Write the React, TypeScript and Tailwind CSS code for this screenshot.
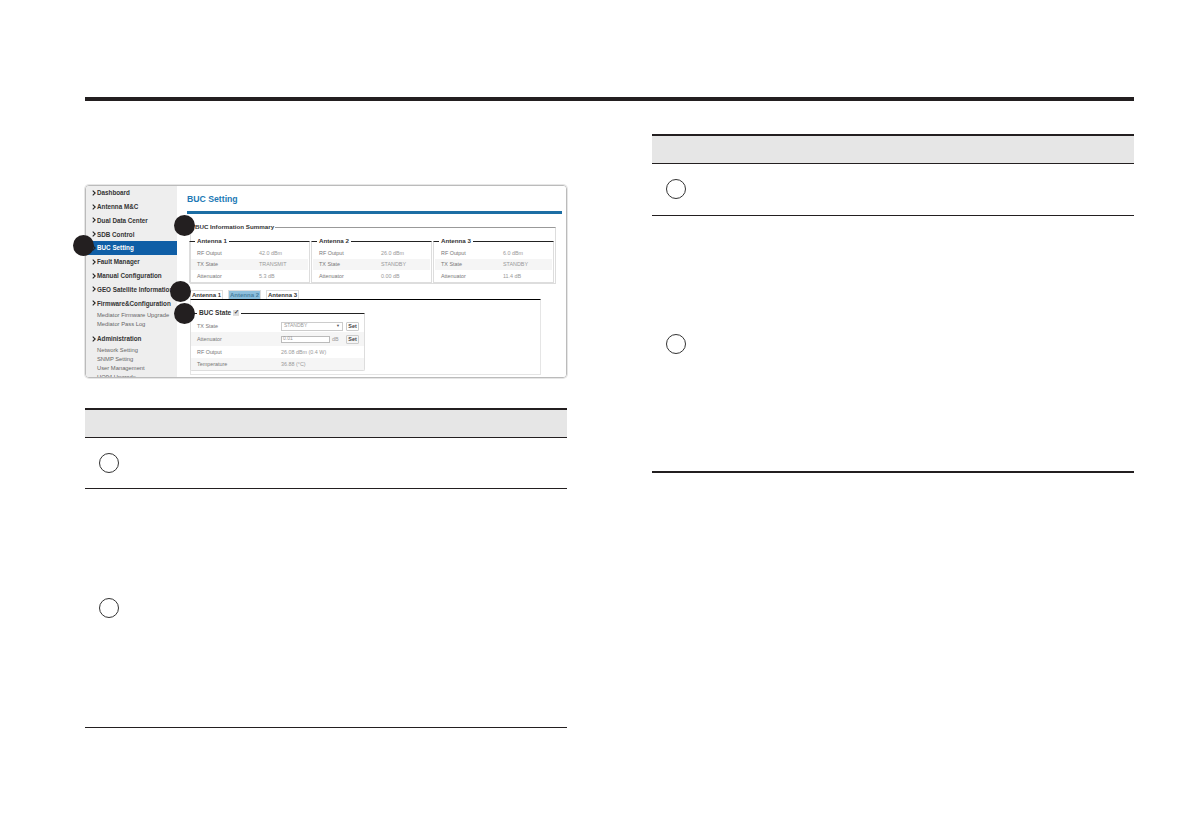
import { ReactNode } from 'react'

const font = { fontFamily: '"Liberation Sans", Arial, sans-serif' }

function Chevron() {
  return (
    <svg width="4" height="6" viewBox="0 0 4 6" className="mr-px shrink-0">
      <path d="M0.7 0.6 L3.2 3 L0.7 5.4" fill="none" stroke="#222" strokeWidth="1.1" />
    </svg>
  )
}

function NavItem({ label, active }: { label: string; active?: boolean }) {
  return (
    <div
      className={`flex items-center h-[13.8px] pl-[6px] text-[6.3px] font-bold whitespace-nowrap ${
        active ? 'bg-[#0f5ea6] text-white' : 'text-[#333]'
      }`}
    >
      <Chevron />
      {label}
    </div>
  )
}

function SubItem({ label }: { label: string }) {
  return <div className="h-[9px] leading-[9px] pl-[11px] text-[5.8px] text-[#666] whitespace-nowrap">{label}</div>
}

function SummaryBox({ title, rows }: { title: string; rows: string[] }) {
  const labels = ['RF Output', 'TX State', 'Attenuator']
  return (
    <fieldset className="w-[121px] h-[46px] border border-[#ddd] border-t-[#222]">
      <legend className="ml-[5px] px-[2px] text-[6.2px] font-bold leading-[8px] text-[#333]">{title}</legend>
      <div className="mt-[2px] px-px">
        {labels.map((l, i) => (
          <div
            key={l}
            className={`flex items-center h-[11.5px] pl-[6px] text-[5.4px] text-[#777] ${i === 1 ? 'bg-[#f5f5f5]' : ''}`}
          >
            <span className="w-[62px]">{l}</span>
            <span className="text-[#999]">{rows[i]}</span>
          </div>
        ))}
      </div>
    </fieldset>
  )
}

function Tab({ label, active }: { label: string; active?: boolean }) {
  return (
    <div
      className={`flex items-center justify-center w-[33px] h-[9px] border border-[#ddd] border-b-0 text-[6px] font-bold ${
        active ? 'bg-[#8dbfdc] text-[#4a7f9f]' : 'bg-white text-[#333]'
      }`}
    >
      {label}
    </div>
  )
}

function SetButton() {
  return (
    <span className="flex items-center justify-center w-[13px] h-[9px] ml-auto mr-[5px] border border-[#ccc] rounded-[1px] text-[5.4px] font-bold text-[#444]">
      Set
    </span>
  )
}

function StateRow({ label, shaded, tall, children }: { label: string; shaded?: boolean; tall?: boolean; children: ReactNode }) {
  return (
    <div
      className={`flex items-center ${tall ? 'h-[14px]' : 'h-[12px]'} pl-[6px] text-[5.4px] text-[#777] ${shaded ? 'bg-[#f5f5f5]' : ''}`}
    >
      <span className="w-[84px] shrink-0">{label}</span>
      {children}
    </div>
  )
}

function BlackDot({ className }: { className: string }) {
  return <div className={`absolute w-[21px] h-[21px] rounded-full bg-[#231f20] ${className}`} />
}

function Screenshot() {
  return (
    <div className="relative h-[193px]">
      <div className="flex h-full overflow-hidden rounded-[4px] border border-[#bbb] shadow-[0_0_0_1px_#e6e6e6]">
        <aside className="w-[91px] shrink-0 bg-[#eeeeee]">
          <NavItem label="Dashboard" />
          <NavItem label="Antenna M&C" />
          <NavItem label="Dual Data Center" />
          <NavItem label="SDB Control" />
          <NavItem label="BUC Setting" active />
          <NavItem label="Fault Manager" />
          <NavItem label="Manual Configuration" />
          <NavItem label="GEO Satellite Information" />
          <NavItem label="Firmware&Configuration" />
          <div className="h-px" />
          <SubItem label="Mediator Firmware Upgrade" />
          <SubItem label="Mediator Pass Log" />
          <div className="h-[3px]" />
          <NavItem label="Administration" />
          <SubItem label="Network Setting" />
          <SubItem label="SNMP Setting" />
          <SubItem label="User Management" />
          <SubItem label="HQ94 Upgrade" />
        </aside>
        <main className="flex-1 min-w-0 pl-[10px] pr-[4px] bg-white">
          <h2 className="mt-[7px] h-[12px] leading-[12px] text-[8.7px] font-bold text-[#2179b5]">BUC Setting</h2>
          <div className="mt-[6px] h-[3px] bg-[#1c6ea4]" />
          <fieldset className="mt-[9px] ml-[3px] w-[366px] h-[61px] border border-[#ddd] border-t-[#999]">
            <legend className="ml-[3px] px-[1px] text-[6.2px] font-bold leading-[8px] text-[#333]">BUC Information Summary</legend>
            <div className="flex gap-px mt-[6px] -ml-[2px]">
              <SummaryBox title="Antenna 1" rows={['42.0 dBm', 'TRANSMIT', '5.3 dB']} />
              <SummaryBox title="Antenna 2" rows={['26.0 dBm', 'STANDBY', '0.00 dB']} />
              <SummaryBox title="Antenna 3" rows={['6.0 dBm', 'STANDBY', '11.4 dB']} />
            </div>
          </fieldset>
          <div className="flex gap-[5px] mt-[6px] ml-[3px]">
            <Tab label="Antenna 1" />
            <Tab label="Antenna 2" active />
            <Tab label="Antenna 3" />
          </div>
          <div className="ml-[3px] w-[351px] h-[76px] border border-[#e5e5e5] border-t-black pt-[9px]">
            <fieldset className="w-[175px] h-[62px] -ml-px border border-[#ddd] border-t-[#222] rounded-b-[2px]">
              <legend className="ml-[6px] px-[2px] flex items-center gap-[2px] text-[6.6px] font-bold leading-[8px] text-[#333]">
                BUC State
                <span className="flex items-center justify-center w-[6px] h-[6px] bg-[#ddd] text-[5.5px] leading-none">✓</span>
              </legend>
              <div className="mt-[3px]">
                <StateRow label="TX State">
                  <span className="flex items-center justify-between w-[62px] h-[9px] px-[2px] border border-[#ccc] text-[5px] text-[#999]">
                    STANDBY
                    <span className="text-[4px] text-[#555]">▼</span>
                  </span>
                  <SetButton />
                </StateRow>
                <StateRow label="Attenuator" shaded tall>
                  <span className="flex items-center w-[49px] h-[7px] px-px border border-[#bbb] bg-white text-[5px] text-[#999]">0.01</span>
                  <span className="ml-[2px] text-[#999]">dB</span>
                  <SetButton />
                </StateRow>
                <StateRow label="RF Output">
                  <span className="text-[#999]">26.08 dBm (0.4 W)</span>
                </StateRow>
                <StateRow label="Temperature" shaded>
                  <span className="text-[#999]">36.88 (°C)</span>
                </StateRow>
              </div>
            </fieldset>
          </div>
        </main>
      </div>
      <BlackDot className="left-[-12px] top-[50px]" />
      <BlackDot className="left-[89px] top-[30px]" />
      <BlackDot className="left-[85px] top-[96px]" />
      <BlackDot className="left-[89px] top-[118px]" />
    </div>
  )
}

function Badge() {
  return <div className="w-[20px] h-[20px] rounded-full border border-[#333] bg-white" />
}

function SpecTable({ firstRow, secondRow, thick }: { firstRow: number; secondRow: number; thick?: boolean }) {
  return (
    <div className="w-[482px]">
      <div className="h-[30px] bg-[#e6e6e6] border-t-[2px] border-t-[#231f20] border-b border-b-[#231f20]" />
      <div className="flex items-center pl-[13.5px] pb-px border-b border-b-[#231f20]" style={{ height: firstRow }}>
        <Badge />
      </div>
      <div
        className={`flex items-center pl-[13.5px] border-b-[#231f20] ${thick ? 'border-b-[2px]' : 'border-b'}`}
        style={{ height: secondRow }}
      >
        <Badge />
      </div>
    </div>
  )
}

export default function App() {
  return (
    <div className="w-[1191px] h-[839px] overflow-hidden bg-white" style={font}>
      <div className="pt-[97px] pl-[85px]">
        <div className="w-[1049px] h-[4px] bg-[#231f20]" />
        <div className="flex gap-[85px]">
          <section className="w-[482px] pt-[84px]">
            <Screenshot />
            <div className="mt-[30px]">
              <SpecTable firstRow={51} secondRow={239} />
            </div>
          </section>
          <section className="w-[482px] pt-[33px]">
            <SpecTable firstRow={52} secondRow={257} thick />
          </section>
        </div>
      </div>
    </div>
  )
}
